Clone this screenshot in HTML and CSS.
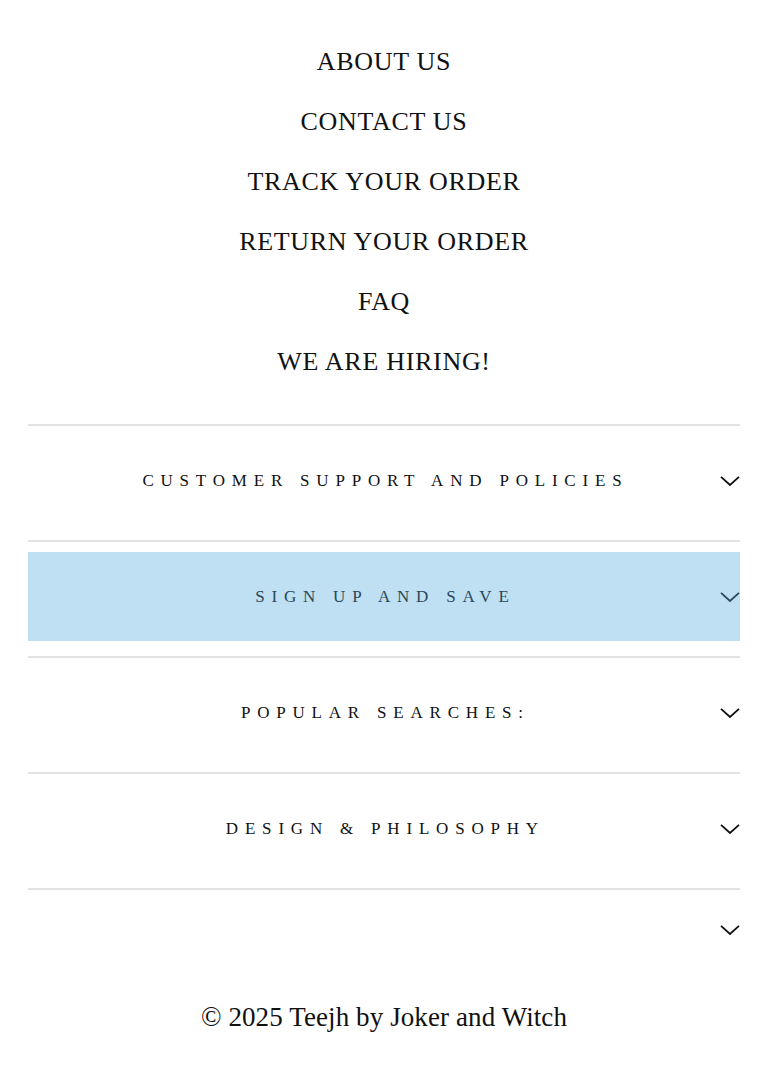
FILE: index.html
```html
<!DOCTYPE html>
<html lang="en">
<head>
<meta charset="utf-8">
<title>Footer</title>
<link rel="stylesheet" href="styles.css">
</head>
<body>
<footer class="footer">
  <nav class="links">
    <a class="link" href="#">ABOUT US</a>
    <a class="link" href="#">CONTACT US</a>
    <a class="link" href="#">TRACK YOUR ORDER</a>
    <a class="link" href="#">RETURN YOUR ORDER</a>
    <a class="link" href="#">FAQ</a>
    <a class="link" href="#">WE ARE HIRING!</a>
  </nav>
  <div class="accordion">
    <div class="item">
      <button class="head">
        <span class="spacer"></span>
        <span class="title">CUSTOMER SUPPORT AND POLICIES</span>
        <svg class="chev" viewBox="0 0 20 10" width="20" height="10"><path d="M1 0.8 L10 9 L19 0.8" fill="none" stroke="currentColor" stroke-width="1.8"/></svg>
      </button>
    </div>
    <div class="item">
      <button class="head active">
        <span class="spacer"></span>
        <span class="title">SIGN UP AND SAVE</span>
        <svg class="chev" viewBox="0 0 20 10" width="20" height="10"><path d="M1 0.8 L10 9 L19 0.8" fill="none" stroke="currentColor" stroke-width="1.8"/></svg>
      </button>
    </div>
    <div class="item">
      <button class="head">
        <span class="spacer"></span>
        <span class="title">POPULAR SEARCHES:</span>
        <svg class="chev" viewBox="0 0 20 10" width="20" height="10"><path d="M1 0.8 L10 9 L19 0.8" fill="none" stroke="currentColor" stroke-width="1.8"/></svg>
      </button>
    </div>
    <div class="item">
      <button class="head">
        <span class="spacer"></span>
        <span class="title">DESIGN &amp; PHILOSOPHY</span>
        <svg class="chev" viewBox="0 0 20 10" width="20" height="10"><path d="M1 0.8 L10 9 L19 0.8" fill="none" stroke="currentColor" stroke-width="1.8"/></svg>
      </button>
    </div>
    <div class="item">
      <button class="head empty">
        <span class="spacer"></span>
        <span class="title"></span>
        <svg class="chev" viewBox="0 0 20 10" width="20" height="10"><path d="M1 0.8 L10 9 L19 0.8" fill="none" stroke="currentColor" stroke-width="1.8"/></svg>
      </button>
    </div>
  </div>
  <p class="copyright">© 2025 Teejh by Joker and Witch</p>
</footer>
</body>
</html>
```

FILE: styles.css
```css
html, body {
  margin: 0;
  padding: 0;
  background: #ffffff;
}

body {
  font-family: "Liberation Serif", "Times New Roman", serif;
  color: #111111;
}

.footer {
  display: flex;
  flex-direction: column;
}

.links {
  display: flex;
  flex-direction: column;
  align-items: center;
  padding-top: 32px;
  margin-bottom: 32px;
}

.link {
  display: block;
  font-size: 26px;
  line-height: 60px;
  letter-spacing: 0.7px;
  color: #111111;
  text-decoration: none;
}

.accordion {
  margin: 0 28px;
  display: flex;
  flex-direction: column;
}

.item {
  border-top: 2px solid #e2e2e2;
  padding: 10px 0 15px;
}

.head {
  display: grid;
  grid-template-columns: 20px 1fr 20px;
  align-items: center;
  width: 100%;
  padding: 30px 0;
  margin: 0;
  border: 0;
  background: transparent;
  font-family: "Liberation Serif", "Times New Roman", serif;
  color: #111111;
  cursor: pointer;
}

.head.active {
  background: #bee0f2;
  color: #2b4759;
}

.head.empty {
  padding: 25px 0;
}

.title {
  display: block;
  text-align: center;
  font-size: 17px;
  line-height: 29px;
  letter-spacing: 6.8px;
  padding-left: 2.8px;
}

.head.empty .title {
  line-height: 0;
  height: 0;
}

.chev {
  display: block;
  justify-self: end;
}

.copyright {
  margin: 22px 0 0;
  text-align: center;
  font-size: 27px;
  line-height: 40px;
  letter-spacing: 0.1px;
  color: #111111;
}
```
